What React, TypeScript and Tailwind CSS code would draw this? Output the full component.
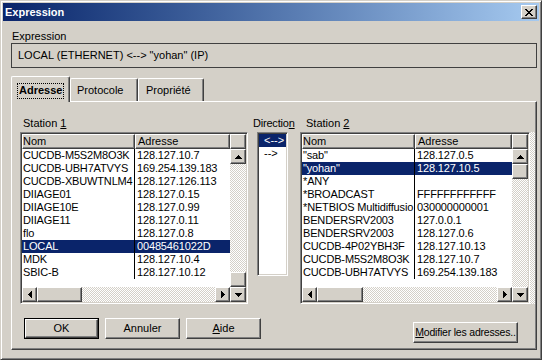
import React from "react";

const bevel =
  "border border-t-white border-l-white border-r-[#404040] border-b-[#404040] shadow-[inset_-1px_-1px_0_#808080]";
const sunken =
  "border border-t-[#808080] border-l-[#808080] border-r-white border-b-white shadow-[inset_1px_1px_0_#404040,inset_-1px_-1px_0_#d4d0c8] p-[1px]";
const hatch =
  "bg-[image:repeating-conic-gradient(#ffffff_0%_25%,#d4d0c8_0%_50%)] bg-[length:2px_2px]";

type Dir = "up" | "down" | "left" | "right";

function Tri({ dir }: { dir: Dir }) {
  if (dir === "up")
    return (
      <svg width="7" height="4" shapeRendering="crispEdges">
        <rect x="3" y="0" width="1" height="1" />
        <rect x="2" y="1" width="3" height="1" />
        <rect x="1" y="2" width="5" height="1" />
        <rect x="0" y="3" width="7" height="1" />
      </svg>
    );
  if (dir === "down")
    return (
      <svg width="7" height="4" shapeRendering="crispEdges">
        <rect x="0" y="0" width="7" height="1" />
        <rect x="1" y="1" width="5" height="1" />
        <rect x="2" y="2" width="3" height="1" />
        <rect x="3" y="3" width="1" height="1" />
      </svg>
    );
  if (dir === "left")
    return (
      <svg width="4" height="7" shapeRendering="crispEdges">
        <rect x="0" y="3" width="1" height="1" />
        <rect x="1" y="2" width="1" height="3" />
        <rect x="2" y="1" width="1" height="5" />
        <rect x="3" y="0" width="1" height="7" />
      </svg>
    );
  return (
    <svg width="4" height="7" shapeRendering="crispEdges">
      <rect x="0" y="0" width="1" height="7" />
      <rect x="1" y="1" width="1" height="5" />
      <rect x="2" y="2" width="1" height="3" />
      <rect x="3" y="3" width="1" height="1" />
    </svg>
  );
}

function VBtn({ dir }: { dir: Dir }) {
  return (
    <div className={`w-[16px] h-[15px] shrink-0 bg-[#d4d0c8] flex items-center justify-center ${bevel}`}>
      <Tri dir={dir} />
    </div>
  );
}

function HBtn({ dir }: { dir: Dir }) {
  return (
    <div className={`w-[15px] h-[15px] shrink-0 bg-[#d4d0c8] flex items-center justify-center ${bevel}`}>
      <Tri dir={dir} />
    </div>
  );
}

type Row = [string, string];

function ListView({
  rows,
  sel,
  thumbTop,
  widthClass,
  hThumbClass,
}: {
  rows: Row[];
  sel: number;
  thumbTop: boolean;
  widthClass: string;
  hThumbClass: string;
}) {
  const thumb = <div className={`w-[16px] h-[15px] shrink-0 bg-[#d4d0c8] ${bevel}`} />;
  return (
    <div className={`${widthClass} h-[172px] shrink-0 bg-white flex flex-col ${sunken}`}>
      <div className="flex flex-1 min-h-0">
        <div className="flex flex-col flex-1 min-w-0">
          <div className="flex h-[15px] shrink-0 leading-[13px]">
            <div className={`w-[113px] shrink-0 bg-[#d4d0c8] ${bevel}`}>Nom</div>
            <div className={`flex-1 bg-[#d4d0c8] pl-[2px] ${bevel}`}>Adresse</div>
          </div>
          <div className="flex-1 bg-white tracking-[-0.15px]">
            {rows.map((r, i) => (
              <div
                key={i}
                className={`flex h-[13px] leading-[13px] ${i === sel ? "bg-[#0a246a] text-white" : "text-black"}`}
              >
                <div className="w-[113px] shrink-0 border-r border-black pl-[1px] overflow-hidden whitespace-nowrap">
                  {r[0]}
                </div>
                <div className="flex-1 pl-[2px] overflow-hidden whitespace-nowrap">{r[1]}</div>
              </div>
            ))}
          </div>
        </div>
        <div className="w-[16px] shrink-0 flex flex-col">
          <div className={`h-[15px] shrink-0 bg-[#d4d0c8] ${bevel}`} />
          <VBtn dir="up" />
          {thumbTop ? thumb : null}
          <div className={`flex-1 ${hatch}`} />
          {!thumbTop ? thumb : null}
        </div>
      </div>
      <div className="flex h-[15px] shrink-0">
        <div className="flex flex-1">
          <HBtn dir="left" />
          <div className={`${hThumbClass} h-[15px] shrink-0 bg-[#d4d0c8] ${bevel}`} />
          <div className={`flex-1 ${hatch}`} />
          <HBtn dir="right" />
        </div>
        <VBtn dir="down" />
      </div>
    </div>
  );
}

const rows1: Row[] = [
  ["CUCDB-M5S2M8O3K", "128.127.10.7"],
  ["CUCDB-UBH7ATVYS", "169.254.139.183"],
  ["CUCDB-XBUWTNLM4", "128.127.126.113"],
  ["DIIAGE01", "128.127.0.15"],
  ["DIIAGE10E", "128.127.0.99"],
  ["DIIAGE11", "128.127.0.11"],
  ["flo", "128.127.0.8"],
  ["LOCAL", "00485461022D"],
  ["MDK", "128.127.10.4"],
  ["SBIC-B", "128.127.10.12"],
];

const rows2: Row[] = [
  ['"sab"', "128.127.0.5"],
  ['"yohan"', "128.127.10.5"],
  ["*ANY", ""],
  ["*BROADCAST", "FFFFFFFFFFFF"],
  ["*NETBIOS Multidiffusio", "030000000001"],
  ["BENDERSRV2003", "127.0.0.1"],
  ["BENDERSRV2003", "128.127.0.6"],
  ["CUCDB-4P02YBH3F", "128.127.10.13"],
  ["CUCDB-M5S2M8O3K", "128.127.10.7"],
  ["CUCDB-UBH7ATVYS", "169.254.139.183"],
];

function Button({ children, cls }: { children: React.ReactNode; cls: string }) {
  return (
    <div className={`${cls} h-[21px] bg-[#d4d0c8] flex items-center justify-center whitespace-nowrap ${bevel}`}>
      {children}
    </div>
  );
}

export default function App() {
  return (
    <div className="w-[542px] h-[360px] bg-[#d4d0c8] text-black text-[11px] font-['Liberation_Sans',Arial,sans-serif] border border-t-[#d4d0c8] border-l-[#d4d0c8] border-r-[#404040] border-b-[#404040] shadow-[inset_1px_1px_0_#ffffff,inset_-1px_-1px_0_#808080] p-[2px] overflow-hidden">
      {/* Title bar */}
      <div className="h-[18px] flex items-center bg-linear-to-r from-[#0a246a] to-[#a6caf0]">
        <div className="pl-[2px] font-bold text-white leading-[13px]">Expression</div>
        <div className={`ml-auto mr-[2px] w-[16px] h-[14px] bg-[#d4d0c8] flex items-center justify-center ${bevel}`}>
          <svg width="8" height="7" shapeRendering="crispEdges">
            <path d="M0 0h2v1h-2zM6 0h2v1h-2zM1 1h2v1h-2zM5 1h2v1h-2zM2 2h4v1h-4zM3 3h2v1h-2zM2 4h4v1h-4zM1 5h2v1h-2zM5 5h2v1h-2zM0 6h2v1h-2zM6 6h2v1h-2z" />
          </svg>
        </div>
      </div>

      {/* Expression label + box */}
      <div className="mt-[9px] ml-[9px] h-[13px] leading-[13px]">Expression</div>
      <div className="ml-[8px] w-[526px] h-[25px] border border-[#404040] flex items-center pl-[6px] leading-[13px]">
        LOCAL (ETHERNET) &lt;--&gt; "yohan" (IP)
      </div>

      {/* Tabs */}
      <div className="mt-[8px] ml-[8px] h-[25px] flex items-end">
        <div className="relative z-10 -mb-[1px] w-[59px] h-[26px] bg-[#d4d0c8] border-l border-t border-white border-r border-r-[#404040] shadow-[inset_-1px_0_0_#808080] rounded-t-[2px] pt-[5px] pl-[5px]">
          <div className="border border-dotted border-black px-[1px] h-[16px] leading-[13px] font-bold inline-block">
            Adresse
          </div>
        </div>
        <div className="w-[68px] h-[23px] bg-[#d4d0c8] border-l border-t border-white border-r border-r-[#404040] shadow-[inset_-1px_0_0_#808080] rounded-t-[2px] flex items-center pl-[6px] leading-[13px]">
          Protocole
        </div>
        <div className="w-[66px] h-[23px] bg-[#d4d0c8] border-l border-t border-white border-r border-r-[#404040] shadow-[inset_-1px_0_0_#808080] rounded-t-[2px] flex items-center pl-[7px] leading-[13px]">
          Propriété
        </div>
      </div>

      {/* Panel */}
      <div className="ml-[8px] w-[526px] h-[249px] border border-t-white border-l-white border-r-[#404040] border-b-[#404040] shadow-[inset_-1px_-1px_0_#808080]">
        <div className="flex items-start pt-[15px] pl-[8px]">
          {/* Station 1 */}
          <div className="w-[228px] shrink-0">
            <div className="h-[13px] leading-[13px] pl-[3px] mb-[2px]">
              Station <span className="underline">1</span>
            </div>
            <ListView rows={rows1} sel={7} thumbTop={false} widthClass="w-[228px]" hThumbClass="w-[45px]" />
          </div>
          {/* Direction */}
          <div className="w-[35px] shrink-0 ml-[5px]">
            <div className="h-[13px] leading-[13px] mb-[2px] whitespace-nowrap tracking-[-0.2px]">
              Directio<span className="underline">n</span>
            </div>
            <div className={`ml-[4px] w-[31px] h-[144px] bg-white ${sunken}`}>
              <div className="h-[13px] leading-[13px] bg-[#0a246a] text-white pl-[5px] whitespace-nowrap">&lt;--&gt;</div>
              <div className="h-[13px] leading-[13px] pl-[5px] whitespace-nowrap">--&gt;</div>
            </div>
          </div>
          {/* Station 2 */}
          <div className="shrink-0 ml-[12px]">
            <div className="h-[13px] leading-[13px] pl-[6px] mb-[2px]">
              Station <span className="underline">2</span>
            </div>
            <div className="flex">
              <ListView rows={rows2} sel={1} thumbTop={true} widthClass="w-[230px]" hThumbClass="w-[46px]" />
              <div className={`w-[5px] h-[172px] ${hatch}`} />
            </div>
          </div>
        </div>

        {/* Buttons */}
        <div className="flex items-start mt-[14px] pl-[12px]">
          <div className="w-[75px] h-[21px] border border-black">
            <div className={`w-full h-full bg-[#d4d0c8] flex items-center justify-center ${bevel}`}>OK</div>
          </div>
          <Button cls="ml-[6px] w-[75px]">Annuler</Button>
          <Button cls="ml-[6px] w-[75px]">
            <span className="underline">A</span>ide
          </Button>
          <Button cls="ml-[152px] mt-[4px] w-[105px] text-[10.5px] tracking-[-0.2px]">
            <span className="underline">M</span>odifier les adresses..
          </Button>
        </div>
      </div>
    </div>
  );
}
